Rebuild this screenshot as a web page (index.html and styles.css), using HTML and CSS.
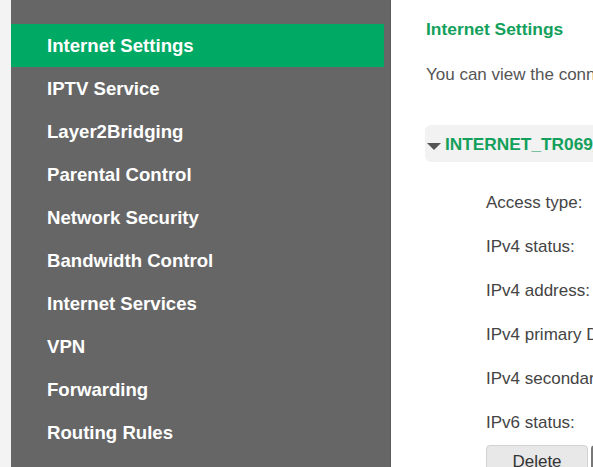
FILE: index.html
```html
<!DOCTYPE html>
<html>
<head>
<meta charset="utf-8">
<link rel="stylesheet" href="styles.css">
</head>
<body>
<div class="page">
  <div class="strip"></div>
  <nav class="sidebar">
    <div class="item active">Internet Settings</div>
    <div class="item">IPTV Service</div>
    <div class="item">Layer2Bridging</div>
    <div class="item">Parental Control</div>
    <div class="item">Network Security</div>
    <div class="item">Bandwidth Control</div>
    <div class="item">Internet Services</div>
    <div class="item">VPN</div>
    <div class="item">Forwarding</div>
    <div class="item">Routing Rules</div>
  </nav>
  <main class="content">
    <h1 class="title">Internet Settings</h1>
    <p class="desc">You can view the connection information and configure the Internet settings.</p>
    <div class="bar"><span class="tri"></span><span class="bar-text">INTERNET_TR069_R_VID_100</span></div>
    <div class="rows">
      <div class="row">Access type:</div>
      <div class="row">IPv4 status:</div>
      <div class="row">IPv4 address:</div>
      <div class="row">IPv4 primary DNS server:</div>
      <div class="row">IPv4 secondary DNS server:</div>
      <div class="row">IPv6 status:</div>
      <div class="buttons">
        <button class="btn">Delete</button>
        <button class="btn dark">Edit</button>
      </div>
    </div>
  </main>
</div>
</body>
</html>
```
FILE: styles.css
```css
html, body {
  margin: 0;
  padding: 0;
  overflow: hidden;
  background: #fff;
}
.page {
  display: flex;
  width: 1200px;
  height: 467px;
  font-family: "Liberation Sans", Arial, sans-serif;
}
.strip {
  width: 11px;
  flex: none;
  background: #f3f3f3;
}
.sidebar {
  width: 380px;
  flex: none;
  background: #666666;
  border-right: 1px solid #5a5a5a;
  padding-top: 24px;
  box-sizing: border-box;
}
.item {
  height: 43px;
  line-height: 43px;
  padding-left: 36px;
  margin-right: 6px;
  color: #fff;
  font-weight: bold;
  font-size: 18.6px;
  white-space: nowrap;
}
.item.active {
  background: #00a964;
}
.content {
  padding-left: 35px;
  flex: 1;
  white-space: nowrap;
}
.title {
  margin: 19px 0 0;
  font-size: 17.4px;
  line-height: 20px;
  color: #12a05b;
  font-weight: bold;
}
.desc {
  margin: 25px 0 0;
  font-size: 17px;
  line-height: 21px;
  color: #555;
}
.bar {
  margin: 40px 0 0 -1px;
  height: 37px;
  background: #f2f2f2;
  border-radius: 6px;
  display: flex;
  align-items: center;
  padding-left: 2px;
}
.tri {
  width: 0;
  height: 0;
  border-left: 7px solid transparent;
  border-right: 7px solid transparent;
  border-top: 7px solid #555;
  margin-top: 6px;
  margin-right: 4px;
}
.bar-text {
  font-size: 17.3px;
  font-weight: bold;
  color: #12a05b;
  margin-top: 1px;
}
.rows {
  margin-top: 19px;
  padding-left: 60px;
}
.row {
  height: 44px;
  line-height: 44px;
  font-size: 17px;
  color: #444;
}
.buttons {
  display: flex;
  gap: 3px;
}
.btn {
  width: 102px;
  height: 30px;
  background: #e8e8e8;
  border: 1px solid #d2d2d2;
  border-radius: 4px;
  font-family: "Liberation Sans", Arial, sans-serif;
  font-size: 17px;
  color: #333;
  padding: 3px 0 0;
  text-align: center;
}
.btn.dark {
  border-left: 2px solid #777;
}
```
